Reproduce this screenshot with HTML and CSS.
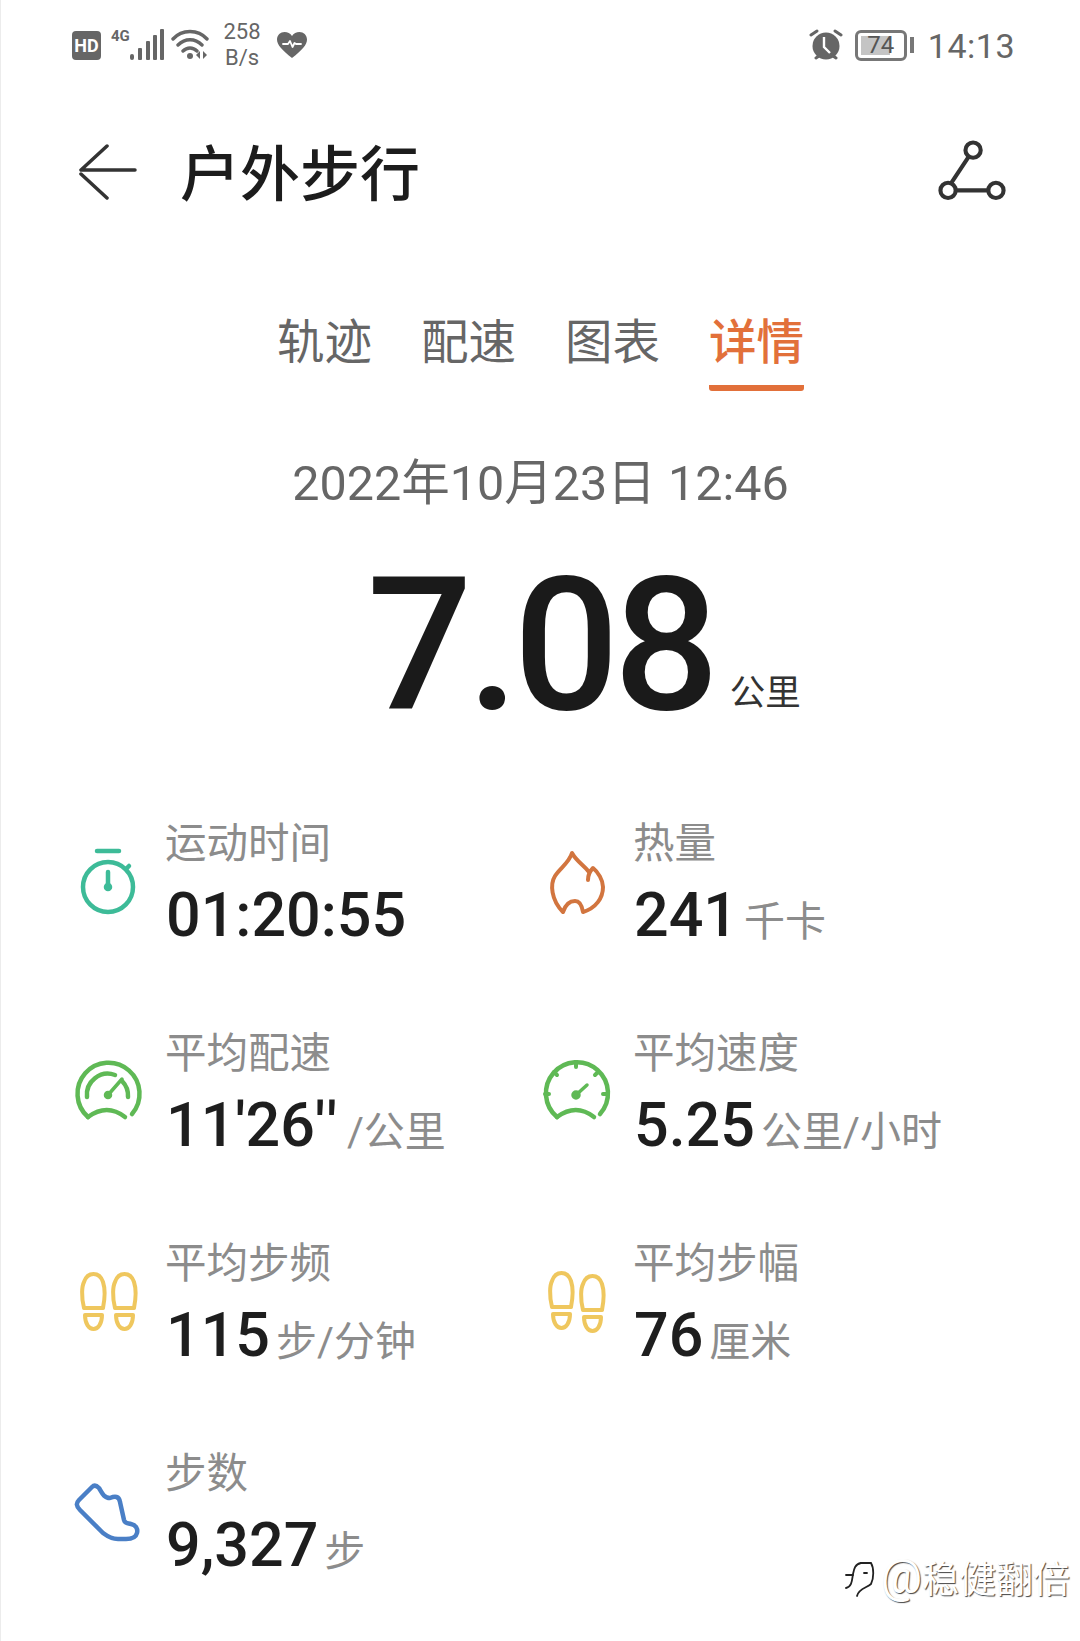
FILE: index.html
```html
<!DOCTYPE html>
<html lang="zh-CN">
<head>
  <meta charset="UTF-8">
  <meta name="viewport" content="width=device-width, initial-scale=1.0">
  <title>户外步行</title>
  <link rel="stylesheet" href="styles.css">
</head>
<body>
  <div class="screen">
    <!-- status bar -->
    <div class="status-bar">
      <div class="status-left">
        <span class="hd-badge">HD</span>
        <div class="signal">
          <span class="net-type">4G</span>
          <svg class="signal-bars" width="34" height="32" viewBox="0 0 34 32">
            <rect x="0" y="25" width="4" height="6" rx="2"/>
            <rect x="8" y="19" width="4" height="12" rx="1"/>
            <rect x="16" y="12" width="4" height="19" rx="1"/>
            <rect x="23" y="6" width="4" height="25" rx="1"/>
            <rect x="30" y="0" width="4" height="31" rx="1"/>
          </svg>
        </div>
        <svg class="wifi" width="38" height="32" viewBox="0 0 38 32">
          <path d="M2 10C11 0 27 0 36 10M7 16C14 9 24 9 31 16M12 22C16 18 22 18 26 22" fill="none" stroke="#666" stroke-width="3.4" stroke-linecap="round"/>
          <circle cx="19" cy="27" r="3" fill="#666"/>
          <path d="M29 22v8l-4-4zM32 22l4 4-4 4z" fill="#666"/>
        </svg>
        <div class="net-speed">
          <span>258</span>
          <span>B/s</span>
        </div>
        <svg class="heart" width="32" height="28" viewBox="0 0 32 28">
          <path d="M16 27C6 19 1 14 1 8.500C1 4 4.500 1 8.500 1C11.500 1 14.500 2.500 16 5C17.500 2.500 20.500 1 23.500 1C27.500 1 31 4 31 8.500C31 14 26 19 16 27Z" fill="#666"/>
          <path d="M7 13h5l2-3 2.500 6 2-4 1.500 1h5" fill="none" stroke="#fff" stroke-width="1.800" stroke-linecap="round" stroke-linejoin="round"/>
        </svg>
      </div>
      <div class="status-right">
        <svg class="alarm" width="34" height="32" viewBox="0 0 34 32">
          <circle cx="17" cy="17" r="13.500" fill="#666"/>
          <path d="M2 6l6-4M32 6l-6-4M7 29l3-2M27 29l-3-2" stroke="#666" stroke-width="3" stroke-linecap="round"/>
          <path d="M15 8v10l6 6" fill="none" stroke="#fff" stroke-width="2.400"/>
        </svg>
        <div class="battery">
          <div class="battery-body">
            <div class="battery-level"></div>
            <span class="battery-text">74</span>
          </div>
          <div class="battery-nub"></div>
        </div>
        <span class="clock">14:13</span>
      </div>
    </div>

    <!-- title row -->
    <header class="title-bar">
      <div class="title-left">
        <svg class="back" width="60" height="58" viewBox="0 0 60 58">
          <path d="M30 2L4 26H58M4 30L30 54" fill="none" stroke="#333" stroke-width="3.500" stroke-linecap="round" stroke-linejoin="round"/>
        </svg>
        <h1 class="title">户外步行</h1>
      </div>
      <svg class="share" width="74" height="68" viewBox="0 0 68 62">
        <path d="M31 16L15 40M20 47H49" fill="none" stroke="#333" stroke-width="3.800"/>
        <circle cx="35" cy="10" r="7" fill="none" stroke="#333" stroke-width="3.800"/>
        <circle cx="12" cy="47" r="7" fill="none" stroke="#333" stroke-width="3.800"/>
        <circle cx="56" cy="47" r="7" fill="none" stroke="#333" stroke-width="3.800"/>
      </svg>
    </header>

    <nav class="tabs">
      <a class="tab">轨迹</a>
      <a class="tab">配速</a>
      <a class="tab">图表</a>
      <a class="tab active">详情</a>
    </nav>

    <div class="date">2022年10月23日 12:46</div>

    <div class="distance">
      <span class="distance-value">7.08</span>
      <span class="distance-unit">公里</span>
    </div>

    <div class="stats">
      <div class="stat">
        <svg class="stat-icon" viewBox="0 0 76 84" fill="none" stroke="#3dbb98" stroke-width="4.500" stroke-linecap="round">
          <path d="M27 13H49"/>
          <circle cx="38" cy="49" r="25"/>
          <path d="M56 31l3-3"/>
          <path d="M38 34V46"/>
          <circle cx="38" cy="49" r="3" fill="#3dbb98" stroke-width="2.500"/>
        </svg>
        <div class="stat-text">
          <div class="stat-label">运动时间</div>
          <div class="stat-value">01:20:55</div>
        </div>
      </div>
      <div class="stat">
        <svg class="stat-icon" viewBox="0 0 76 84" fill="none" stroke="#d2753f" stroke-width="4" stroke-linecap="round" stroke-linejoin="round">
          <path d="M51 34C46 27 39 24 34 15C31 25 22 30 17 38C12 46 13 62 25 74C27 68 31 63 37 63C42 63 44 68 45 74C58 70 65 60 65 49C65 42 60 34 55 30C51 34 50 38 50 42"/>
        </svg>
        <div class="stat-text">
          <div class="stat-label">热量</div>
          <div class="stat-value">241<span class="stat-unit">千卡</span></div>
        </div>
      </div>
      <div class="stat">
        <svg class="stat-icon" viewBox="0 0 76 84" fill="none" stroke="#5fb955" stroke-width="4.500" stroke-linecap="round">
          <path d="M18 69A31 31 0 1 1 62 66"/>
          <path d="M18 69Q37 55 55 69"/>
          <path d="M17 49A21 21 0 0 1 45 27"/>
          <path d="M52 33A21 21 0 0 1 58 49"/>
          <path d="M38 47L52 31" stroke-width="3.500"/>
          <circle cx="38" cy="47" r="3" fill="#5fb955" stroke-width="2.500"/>
        </svg>
        <div class="stat-text">
          <div class="stat-label">平均配速</div>
          <div class="stat-value">11'26<span class="seconds">''</span><span class="stat-unit">/公里</span></div>
        </div>
      </div>
      <div class="stat">
        <svg class="stat-icon" viewBox="0 0 76 84" fill="none" stroke="#5fb955" stroke-width="4.500" stroke-linecap="round">
          <path d="M19 69A31 31 0 1 1 62 66"/>
          <path d="M19 69Q38 55 56 69"/>
          <path d="M38 15v4M16 24l3 3M60 24l-3 3M7 46h4M69 46h-4" stroke-width="4"/>
          <path d="M38 47L49 37" stroke-width="3.500"/>
          <circle cx="38" cy="47" r="3.500" fill="#5fb955" stroke-width="2.500"/>
        </svg>
        <div class="stat-text">
          <div class="stat-label">平均速度</div>
          <div class="stat-value">5.25<span class="stat-unit">公里/小时</span></div>
        </div>
      </div>
      <div class="stat">
        <svg class="stat-icon" viewBox="0 0 76 84" fill="none" stroke="#efc75e" stroke-width="4">
          <g id="soles">
            <path d="M14 50C11 38 12 28 14 24C16 18 20 16 23.500 16C27 16 31 18 33 24C35 30 35 40 33 50Z" stroke-linejoin="round"/>
            <path d="M15 57H32C32 66 28 71 23.500 71C19 71 15 66 15 57Z" stroke-linejoin="round"/>
          </g>
          <use href="#soles" x="31"/>
        </svg>
        <div class="stat-text">
          <div class="stat-label">平均步频</div>
          <div class="stat-value">115<span class="stat-unit">步/分钟</span></div>
        </div>
      </div>
      <div class="stat">
        <svg class="stat-icon" viewBox="0 0 76 84" fill="none" stroke="#efc75e" stroke-width="4">
          <use href="#soles" y="-1"/>
          <use href="#soles" x="31" y="2"/>
        </svg>
        <div class="stat-text">
          <div class="stat-label">平均步幅</div>
          <div class="stat-value">76<span class="stat-unit">厘米</span></div>
        </div>
      </div>
      <div class="stat">
        <svg class="stat-icon" viewBox="0 0 76 84" fill="none" stroke="#4a7fc6" stroke-width="4.500" stroke-linejoin="round">
          <path d="M22 19Q25 16 29 20C32 25 34 30 40 30C45 28 49 28 50 34L54 52C55 56 58 55 61 56C66 57 68 61 67 65C66 69 62 71 56 71L48 71C42 71 37 68 33 65L10 42C6 38 6 35 9 32Z"/>
        </svg>
        <div class="stat-text">
          <div class="stat-label">步数</div>
          <div class="stat-value">9,327<span class="stat-unit">步</span></div>
        </div>
      </div>
    </div>

    <!-- account mark in the corner -->
    <div class="mark">
      <svg class="mark-logo" width="36" height="38" viewBox="0 0 34 38" fill="none" stroke="#222" stroke-width="1.800" stroke-linecap="round">
        <path d="M18 3C12 4 11 9 10 14C9 20 9 27 3 28"/>
        <path d="M3 15H10"/>
        <path d="M18 3H28C31 8 31 18 28 24C24 28 16 28 14 36"/>
        <path d="M21 13h3"/>
      </svg>
      <span class="mark-text"><span class="mark-at">@</span>稳健翻倍</span>
    </div>
  </div>
</body>
</html>
```

FILE: styles.css
```css
* {
  box-sizing: border-box;
}
body {
  margin: 0;
  background: #fff;
  font-family: Roboto, "Noto Sans CJK SC", sans-serif;
}
.screen {
  position: relative;
  width: 1080px;
  height: 1641px;
  overflow: hidden;
  background: #fff;
  border-left: 1px solid #ececec;
}

/* status bar */
.status-bar {
  display: flex;
  justify-content: space-between;
  align-items: center;
  height: 90px;
  padding: 0 65px 0 71px;
  color: #666;
}
.status-left,
.status-right {
  display: flex;
  align-items: center;
}
.hd-badge {
  width: 29px;
  height: 29px;
  border-radius: 4px;
  background: #666;
  color: #fff;
  font-size: 18px;
  font-weight: 700;
  line-height: 29px;
  text-align: center;
}
.signal {
  display: flex;
  align-items: flex-start;
  height: 32px;
  margin-left: 10px;
}
.net-type {
  width: 19px;
  font-size: 15px;
  font-weight: 700;
  line-height: 14px;
}
.signal-bars {
  fill: #666;
}
.wifi {
  margin-left: 7px;
}
.net-speed {
  display: flex;
  flex-direction: column;
  align-items: center;
  width: 42px;
  margin-left: 12px;
  font-size: 22px;
  line-height: 26px;
}
.heart {
  margin-left: 13px;
}
.alarm {
  margin-right: 12px;
}
.battery {
  display: flex;
  align-items: center;
  margin-right: 14px;
}
.battery-body {
  position: relative;
  width: 52px;
  height: 31px;
  border: 3px solid #777;
  border-radius: 6px;
  padding: 3px;
}
.battery-level {
  width: 74%;
  height: 100%;
  background: #c4c4c4;
}
.battery-text {
  position: absolute;
  inset: 0;
  color: #555;
  font-size: 24px;
  line-height: 25px;
  text-align: center;
}
.battery-nub {
  width: 4px;
  height: 16px;
  margin-left: 3px;
  background: #777;
}
.clock {
  margin-top: 2px;
  font-size: 34px;
  letter-spacing: 0.5px;
}

/* title row */
.title-bar {
  display: flex;
  justify-content: space-between;
  align-items: center;
  height: 110px;
  margin-top: 28px;
  padding: 0 71px 0 76px;
}
.title-left {
  display: flex;
  align-items: center;
}
.title {
  margin: 6px 0 0 43px;
  color: #1c1c1c;
  font-size: 60px;
  font-weight: 500;
  line-height: 70px;
}

/* tabs */
.tabs {
  display: flex;
  justify-content: center;
  gap: 49px;
  margin-top: 87px;
}
.tab {
  height: 76px;
  padding-bottom: 14px;
  border-bottom: 6px solid transparent;
  border-radius: 0 0 3px 3px;
  color: #666;
  font-size: 47.500px;
  line-height: 56px;
}
.tab.active {
  border-bottom-color: #e2703a;
  color: #e2703a;
  font-weight: 500;
}

.date {
  margin-top: 63px;
  color: #666;
  font-size: 48.500px;
  line-height: 60px;
  text-align: center;
}

/* total distance */
.distance {
  display: flex;
  align-items: baseline;
  height: 175px;
  margin-top: 44px;
  padding-left: 366px;
}
.distance-value {
  color: #1a1a1a;
  font-size: 186px;
  font-weight: 500;
  letter-spacing: -5.500px;
  line-height: 175px;
}
.distance-unit {
  margin-left: 16px;
  color: #333;
  font-size: 35.500px;
  transform: translateY(-4px);
}

/* stat grid */
.stats {
  display: grid;
  grid-template-columns: 468px 468px;
  row-gap: 76px;
  margin-top: 83px;
  padding-left: 69px;
}
.stat {
  display: flex;
  align-items: center;
  gap: 19px;
  height: 134px;
}
.stat-icon {
  flex: none;
  width: 76px;
  height: 84px;
  margin-top: -6px;
}
.stat-label {
  color: #8c8c8c;
  font-size: 41.500px;
  line-height: 56px;
}
.stat-value {
  margin-top: 8px;
  padding-left: 1px;
  color: #1e1e1e;
  font-size: 61px;
  font-weight: 500;
  line-height: 70px;
  white-space: nowrap;
}
.seconds {
  letter-spacing: 4px;
}
.stat-unit {
  margin-left: 6px;
  color: #8c8c8c;
  font-size: 41px;
  font-weight: 400;
  line-height: 1;
}

/* corner mark */
.mark {
  position: absolute;
  right: 10px;
  bottom: 38px;
  display: flex;
  align-items: center;
  gap: 3px;
}
.mark-text {
  color: #fff;
  font-size: 37px;
  line-height: 44px;
  text-shadow: 1px 1px 1px #444;
}
.mark-at {
  font-size: 46px;
}
```
